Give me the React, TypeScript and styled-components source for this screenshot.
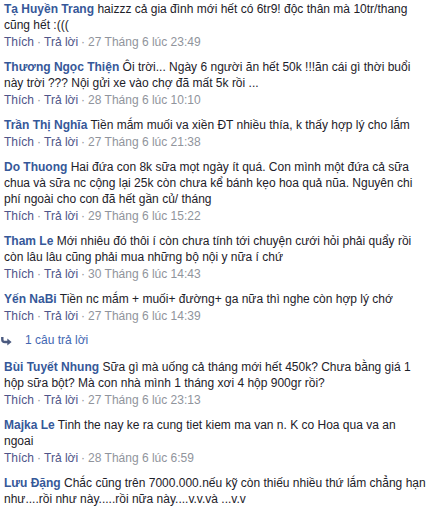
import React from "react";
import styled, { createGlobalStyle } from "styled-components";

const Global = createGlobalStyle`
  html, body { margin: 0; padding: 0; background: #fff; }
  body { font-family: "Liberation Sans", Arial, Helvetica, sans-serif; }
`;

const List = styled.div`
  width: 424px;
  padding: 1px 0 0 4px;
  display: flex;
  flex-direction: column;
`;

const Comment = styled.div`
  display: flex;
  flex-direction: column;
  margin-bottom: 9px;
`;

const Body = styled.div`
  font-size: 12px;
  line-height: 16px;
  color: #1d2129;
`;

const Name = styled.span`
  font-weight: bold;
  color: #365899;
`;

const Meta = styled.div`
  margin-top: 1px;
  font-size: 12px;
  line-height: 16px;
  color: #90949c;
`;

const Action = styled.span`
  color: #4f5589;
`;

const Dot = styled.span`
  margin: 0 3px;
`;

const ReplyRow = styled.div`
  display: flex;
  align-items: center;
  height: 16px;
  margin: -1px 0 11px;
  font-size: 12px;
  line-height: 16px;
  color: #4267b2;
  gap: 13px;
`;

const ReplyIcon = styled.svg`
  width: 11px;
  height: 9px;
  flex: none;
  margin-left: -3px;
  margin-top: 3px;
`;

type C = { name: string; text: string; time: string; replies?: string };

const data: C[] = [
  { name: "Tạ Huyền Trang", text: "haizzz cả gia đình mới hết có 6tr9! độc thân mà 10tr/thang cũng hết :(((", time: "27 Tháng 6 lúc 23:49" },
  { name: "Thương Ngọc Thiện", text: "Ôi trời... Ngày 6 người ăn hết 50k !!!ăn cái gì thời buổi này trời ??? Nội gửi xe vào chợ đã mất 5k rồi ...", time: "28 Tháng 6 lúc 10:10" },
  { name: "Trần Thị Nghĩa", text: "Tiền mắm muối va xiền ĐT nhiều thía, k thấy hợp lý cho lắm", time: "27 Tháng 6 lúc 21:38" },
  { name: "Do Thuong", text: "Hai đứa con 8k sữa mọt ngày ít quá. Con mình một đứa cả sữa chua và sữa nc cộng lại 25k còn chưa kể bánh kẹo hoa quả nũa. Nguyên chi phí ngoài cho con đã hết gần củ/ tháng", time: "29 Tháng 6 lúc 15:22" },
  { name: "Tham Le", text: "Mới nhiêu đó thôi í còn chưa tính tới chuyện cưới hỏi phải quẩy rồi còn lâu lâu cũng phải mua những bộ nội y nữa í chứ", time: "30 Tháng 6 lúc 14:43" },
  { name: "Yến NaBi", text: "Tiền nc mắm + muối+ đường+ ga nữa thì nghe còn hợp lý chớ", time: "27 Tháng 6 lúc 14:39", replies: "1 câu trả lời" },
  { name: "Bùi Tuyết Nhung", text: "Sữa gì mà uống cả tháng mới hết 450k? Chưa bằng giá 1 hộp sữa bột? Mà con nhà mình 1 tháng xơi 4 hộp 900gr rồi?", time: "27 Tháng 6 lúc 23:13" },
  { name: "Majka Le", text: "Tinh the nay ke ra cung tiet kiem ma van n. K co Hoa qua va an ngoai", time: "28 Tháng 6 lúc 6:59" },
  { name: "Lưu Đặng", text: "Chắc cũng trên 7000.000.nếu kỹ còn thiếu nhiều thứ lắm chẳng hạn như....rồi như này.....rồi nữa này....v.v.và ...v.v", time: "" },
];

export default function App() {
  return (
    <>
      <Global />
      <List>
        {data.map((c, i) => (
          <React.Fragment key={i}>
            <Comment>
              <Body>
                <Name>{c.name}</Name> {c.text}
              </Body>
              {c.time && (
                <Meta>
                  <Action>Thích</Action>
                  <Dot>·</Dot>
                  <Action>Trả lời</Action>
                  <Dot>·</Dot>
                  {c.time}
                </Meta>
              )}
            </Comment>
            {c.replies && (
              <ReplyRow>
                <ReplyIcon viewBox="0 0 11 9">
                  <path d="M1.3 0 V2.4 Q1.3 5 4 5 H7" fill="none" stroke="#4b5a80" strokeWidth="2.4" />
                  <path d="M6.3 1.6 L10.6 5 L6.3 8.4 Z" fill="#4b5a80" />
                </ReplyIcon>
                <span>{c.replies}</span>
              </ReplyRow>
            )}
          </React.Fragment>
        ))}
      </List>
    </>
  );
}
